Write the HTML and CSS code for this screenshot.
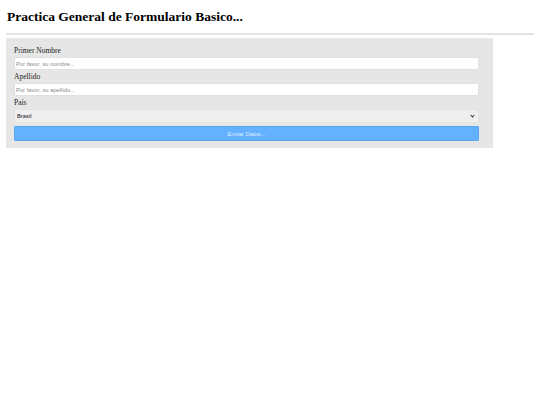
FILE: index.html
```html
<!DOCTYPE html>
<html lang="es">
<head>
    <meta charset="UTF-8">
    <meta name="viewport" content="width=device-width, initial-scale=1.0">
    <title>Formulario Basico</title>
    <link rel="stylesheet" href="styles.css">
</head>
<body>
    <h1>Practica General de Formulario Basico...</h1>
    <hr>
    <form class="form-box" onsubmit="event.preventDefault()">
        <label for="nombre">Primer Nombre</label>
        <input type="text" id="nombre" placeholder="Por favor, su nombre...">
        <label for="apellido">Apellido</label>
        <input type="text" id="apellido" placeholder="Por favor, su apellido...">
        <label for="pais">País</label>
        <div class="select-wrap">
            <select id="pais">
                <option>Brasil</option>
                <option>Argentina</option>
                <option>Chile</option>
                <option>Uruguay</option>
            </select>
        </div>
        <button type="submit">Enviar Datos...</button>
    </form>
</body>
</html>
```

FILE: styles.css
```css
body {
    margin: 0;
    padding: 9px 6px 7px 6px;
    font-family: "Liberation Serif", "Times New Roman", serif;
    background-color: #fff;
}
h1 {
    margin: 0 0 0 1px;
    font-size: 13.5px;
    line-height: 16px;
}
hr {
    margin: 8px 0 3px 0;
    height: 0;
    border: none;
    border-top: 2px solid #e2e2e2;
}
.form-box {
    width: 465px;
    padding: 8px 14px 7px 8px;
    background-color: #e6e6e6;
}
.form-box label {
    display: block;
    font-size: 7.5px;
    line-height: 10px;
    margin-bottom: 1px;
    color: #1a1a1a;
}
.form-box input,
.form-box select {
    display: block;
    box-sizing: border-box;
    width: 465px;
    margin: 0;
    font-family: "Liberation Sans", Arial, sans-serif;
    font-size: 5.8px;
}
.form-box input {
    height: 13px;
    margin-bottom: 2px;
    padding: 0 1px;
    border: 1px solid #e0e0e0;
    border-radius: 1px;
    background: #fff;
}
.form-box input::placeholder {
    color: #8a8a8a;
}
.select-wrap {
    position: relative;
    margin-bottom: 3px;
}
.form-box select {
    appearance: none;
    -webkit-appearance: none;
    height: 14px;
    padding: 0 2px;
    border: 1px solid #e2e2e2;
    border-radius: 1px;
    background-color: #efefef;
    color: #111;
}
/* small chevron for the select */
.select-wrap::after {
    content: "";
    position: absolute;
    right: 5px;
    top: 5px;
    width: 2px;
    height: 2px;
    border-right: 1px solid #333;
    border-bottom: 1px solid #333;
    transform: rotate(45deg);
    pointer-events: none;
}
.form-box button {
    display: block;
    box-sizing: border-box;
    width: 465px;
    height: 15px;
    border: 1px solid #5aa6f0;
    border-radius: 1px;
    background-color: #64b1ff;
    color: #dceeff;
    font-family: "Liberation Sans", Arial, sans-serif;
    font-size: 5.8px;
    cursor: pointer;
}
```
